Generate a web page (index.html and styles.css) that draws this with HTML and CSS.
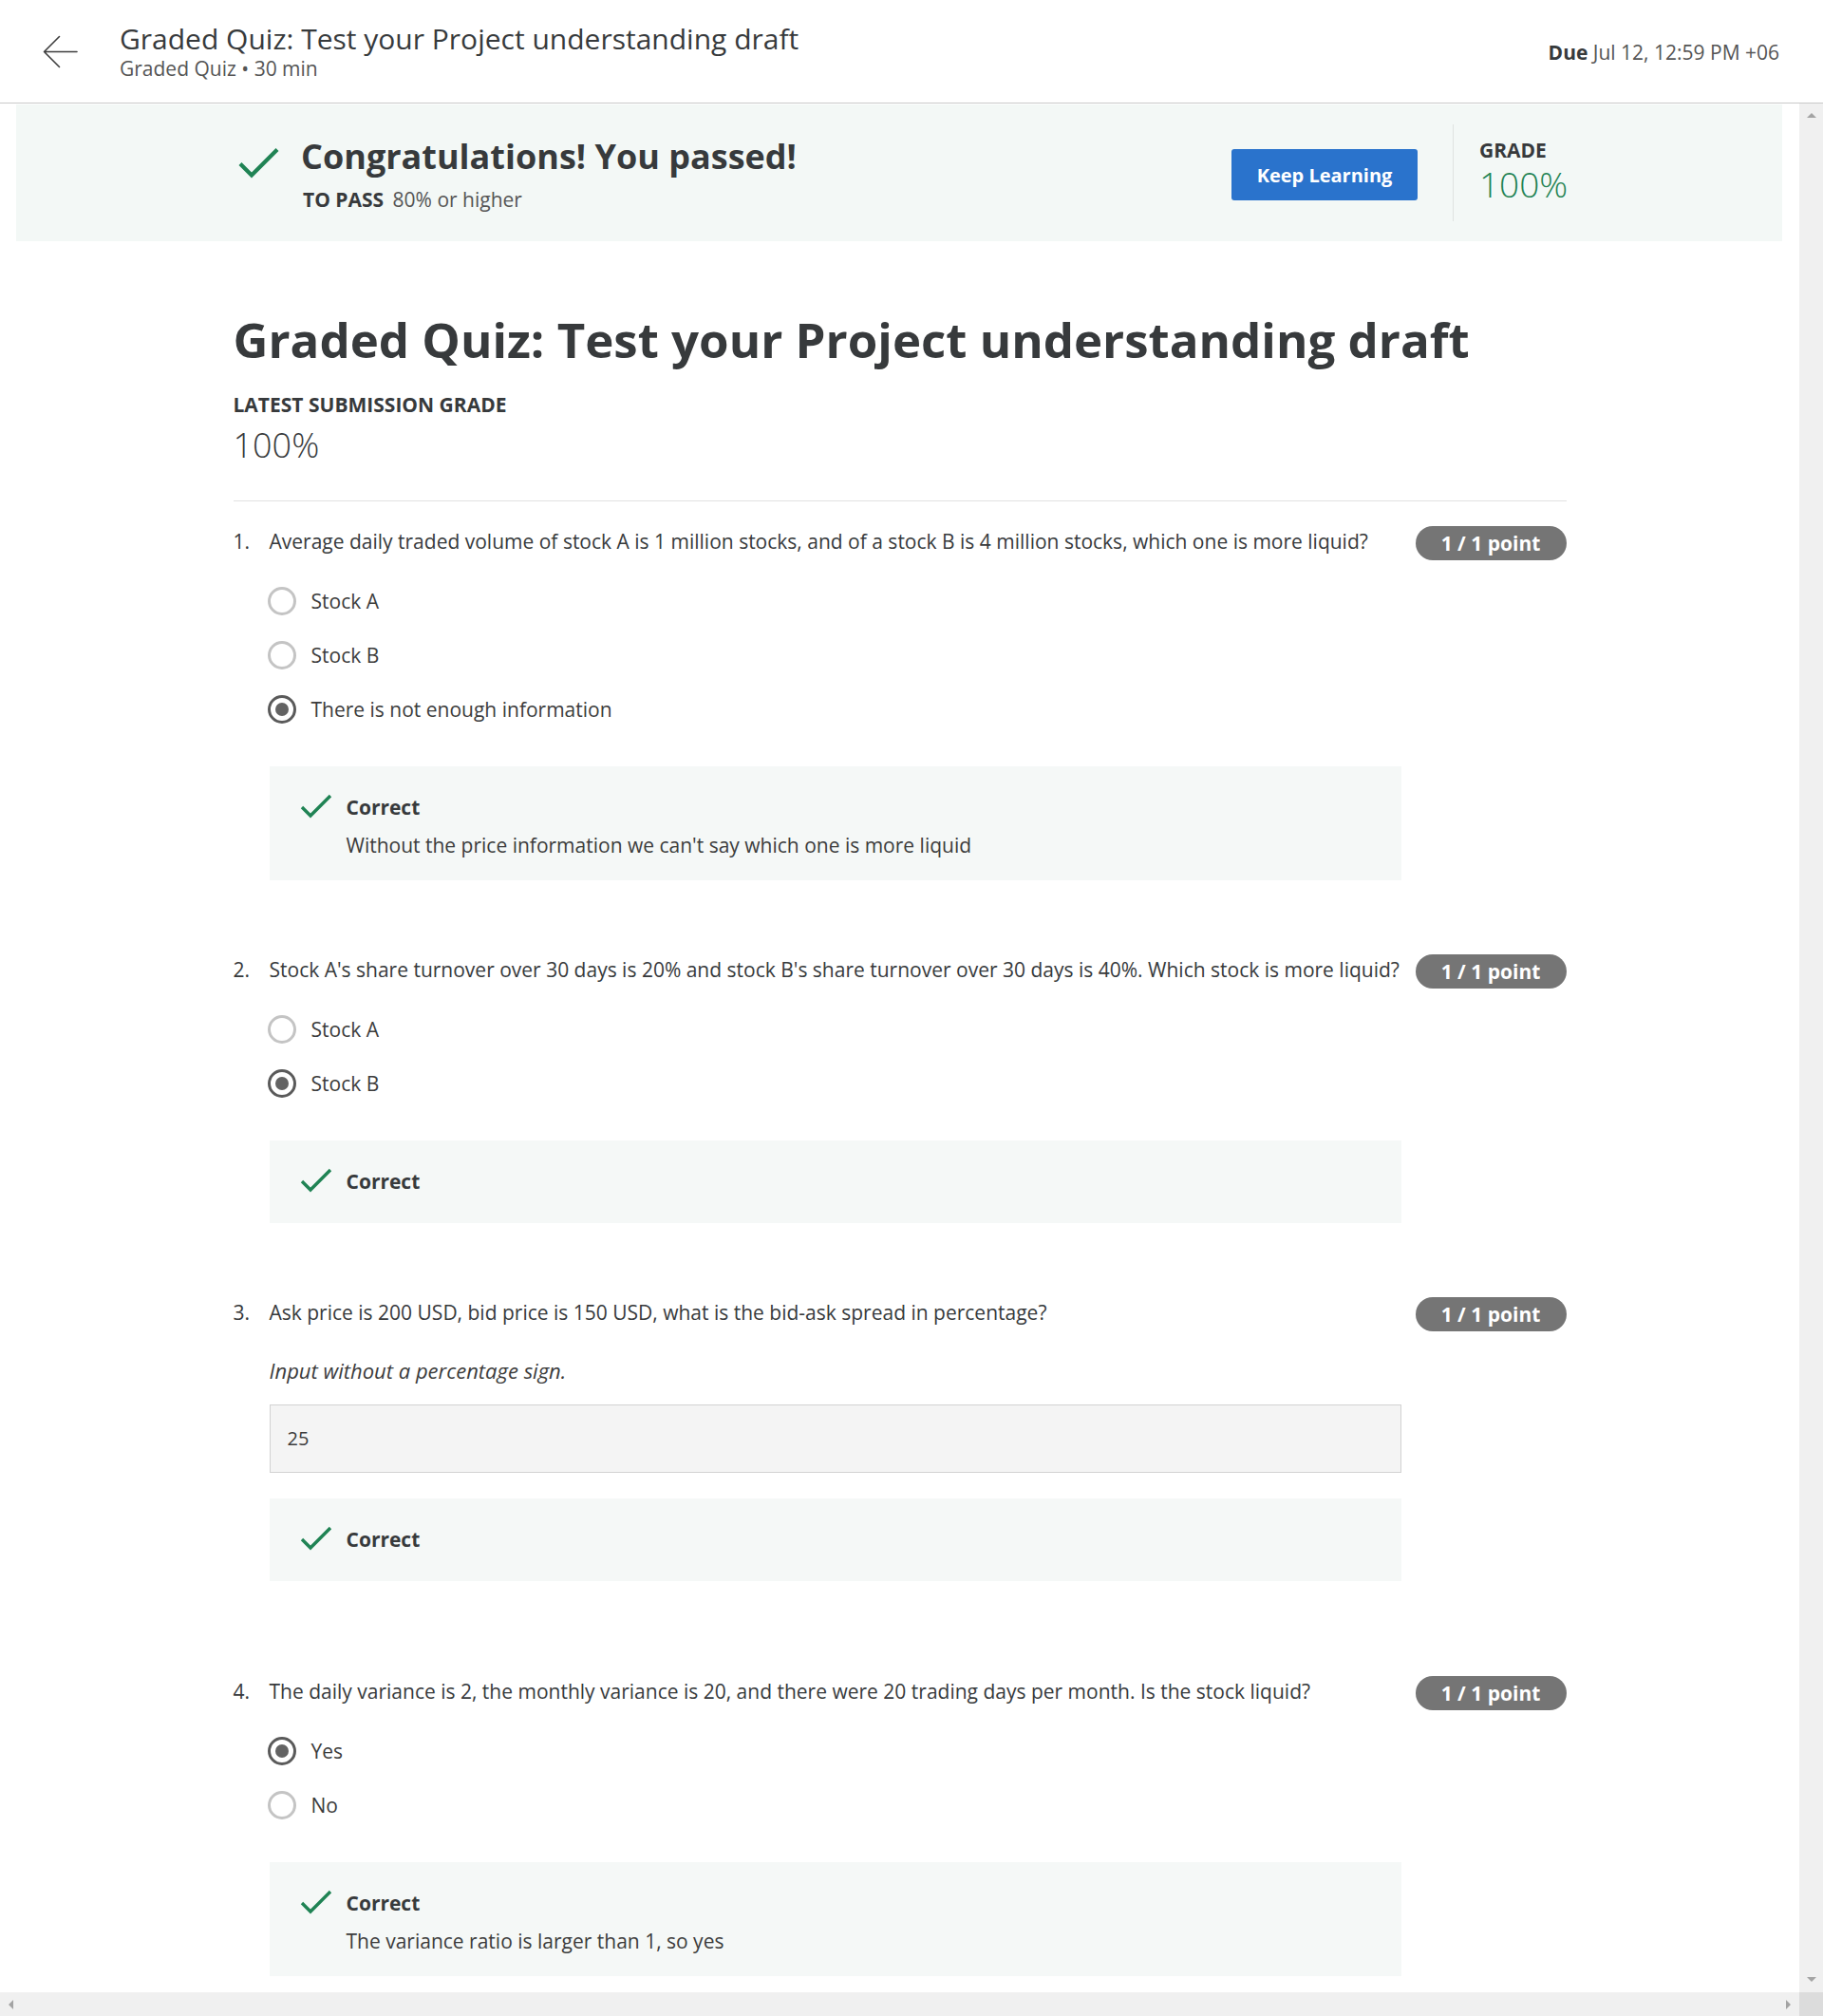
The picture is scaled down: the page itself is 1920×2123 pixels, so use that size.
FILE: index.html
```html
<!DOCTYPE html>
<html lang="en">
<head>
<meta charset="utf-8">
<title>Graded Quiz</title>
<link rel="stylesheet" href="styles.css">
</head>
<body>
<div class="app">
  <header class="topbar">
    <a class="back" href="#" aria-label="Back">
      <svg width="37" height="35" viewBox="0 0 37 35" fill="none" stroke="#3d3d3d" stroke-width="1.6" stroke-linecap="round" stroke-linejoin="round"><path d="M36 17.5H1.5M17.5 1.5L1.5 17.5L17.5 33.5"/></svg>
    </a>
    <div class="titles">
      <div class="title">Graded Quiz: Test your Project understanding draft</div>
      <div class="subtitle">Graded Quiz • 30 min</div>
    </div>
    <div class="due"><b>Due</b> Jul 12, 12:59 PM +06</div>
  </header>

  <div class="viewport">
    <main class="content">
      <section class="banner">
        <div class="banner-inner">
          <div class="pass">
            <svg class="pass-check" width="44" height="34" viewBox="0 0 44 34" fill="none" stroke="#1f8354" stroke-width="4.2" stroke-linecap="butt" stroke-linejoin="miter"><path d="M3 18.5L15 30.5L42 3.5"/></svg>
            <div class="pass-text">
              <h2 class="pass-title">Congratulations! You passed!</h2>
              <p class="pass-req"><b>TO PASS</b> 80% or higher</p>
            </div>
          </div>
          <button class="keep">Keep Learning</button>
          <div class="grade">
            <div class="grade-label">GRADE</div>
            <div class="grade-value">100%</div>
          </div>
        </div>
      </section>

      <div class="column">
        <h1 class="quiz-title">Graded Quiz: Test your Project understanding draft</h1>
        <div class="latest-label">LATEST SUBMISSION GRADE</div>
        <div class="latest-value">100%</div>
        <hr class="rule">

        <div class="question">
          <div class="q-num">1.</div>
          <div class="q-body">
            <div class="q-text">Average daily traded volume of stock A is 1 million stocks, and of a stock B is 4 million stocks, which one is more liquid?</div>
            <div class="options">
              <div class="option"><span class="radio"></span><span>Stock A</span></div>
              <div class="option"><span class="radio"></span><span>Stock B</span></div>
              <div class="option"><span class="radio checked"></span><span>There is not enough information</span></div>
            </div>
            <div class="feedback">
              <div class="fb-head">
                <svg class="fb-check" width="34" height="26" viewBox="0 0 34 26" fill="none" stroke="#1f8354" stroke-width="3.4"><path d="M2 14L11 23L32 2"/></svg>
                <span>Correct</span>
              </div>
              <div class="fb-text">Without the price information we can't say which one is more liquid</div>
            </div>
          </div>
          <div class="q-points"><span class="badge">1 / 1 point</span></div>
        </div>

        <div class="question">
          <div class="q-num">2.</div>
          <div class="q-body">
            <div class="q-text">Stock A's share turnover over 30 days is 20% and stock B's share turnover over 30 days is 40%. Which stock is more liquid?</div>
            <div class="options">
              <div class="option"><span class="radio"></span><span>Stock A</span></div>
              <div class="option"><span class="radio checked"></span><span>Stock B</span></div>
            </div>
            <div class="feedback">
              <div class="fb-head">
                <svg class="fb-check" width="34" height="26" viewBox="0 0 34 26" fill="none" stroke="#1f8354" stroke-width="3.4"><path d="M2 14L11 23L32 2"/></svg>
                <span>Correct</span>
              </div>
            </div>
          </div>
          <div class="q-points"><span class="badge">1 / 1 point</span></div>
        </div>

        <div class="question">
          <div class="q-num">3.</div>
          <div class="q-body">
            <div class="q-text">Ask price is 200 USD, bid price is 150 USD, what is the bid-ask spread in percentage?</div>
            <div class="q-hint">Input without a percentage sign.</div>
            <div class="answer-input">25</div>
            <div class="feedback feedback-tight">
              <div class="fb-head">
                <svg class="fb-check" width="34" height="26" viewBox="0 0 34 26" fill="none" stroke="#1f8354" stroke-width="3.4"><path d="M2 14L11 23L32 2"/></svg>
                <span>Correct</span>
              </div>
            </div>
          </div>
          <div class="q-points"><span class="badge">1 / 1 point</span></div>
        </div>

        <div class="question question-after-input">
          <div class="q-num">4.</div>
          <div class="q-body">
            <div class="q-text">The daily variance is 2, the monthly variance is 20, and there were 20 trading days per month. Is the stock liquid?</div>
            <div class="options">
              <div class="option"><span class="radio checked"></span><span>Yes</span></div>
              <div class="option"><span class="radio"></span><span>No</span></div>
            </div>
            <div class="feedback">
              <div class="fb-head">
                <svg class="fb-check" width="34" height="26" viewBox="0 0 34 26" fill="none" stroke="#1f8354" stroke-width="3.4"><path d="M2 14L11 23L32 2"/></svg>
                <span>Correct</span>
              </div>
              <div class="fb-text">The variance ratio is larger than 1, so yes</div>
            </div>
          </div>
          <div class="q-points"><span class="badge">1 / 1 point</span></div>
        </div>
      </div>
    </main>

    <div class="vscroll">
      <span class="arrow arrow-up"></span>
      <span class="arrow arrow-down"></span>
    </div>
    <div class="hscroll">
      <span class="arrow arrow-left"></span>
      <span class="arrow arrow-right"></span>
    </div>
    <div class="corner"></div>
  </div>
</div>
</body>
</html>
```

FILE: styles.css
```css
* { box-sizing: border-box; }

html, body {
  margin: 0;
  padding: 0;
  background: #ffffff;
}

body {
  font-family: "Open Sans", "Noto Sans", sans-serif;
  color: #373a3c;
  font-size: 21px;
  line-height: 30px;
}

.app {
  width: 1920px;
  height: 2123px;
  display: flex;
  flex-direction: column;
  overflow: hidden;
}

/* ---------- top bar ---------- */
.topbar {
  flex: 0 0 109px;
  display: flex;
  align-items: center;
  padding: 0 46px 0 45px;
  border-bottom: 1px solid #c9c9c9;
  background: #fff;
}

.back {
  display: flex;
  width: 37px;
  height: 35px;
  margin-right: 44px;
}

.titles {
  flex: 1;
  display: flex;
  flex-direction: column;
}

.title {
  font-size: 30px;
  line-height: 36px;
  color: #373a3c;
}

.subtitle {
  font-size: 21px;
  line-height: 26px;
  color: #555;
}

.due {
  font-size: 21px;
  line-height: 30px;
  color: #555;
  padding-top: 1px;
}

.due b {
  color: #373a3c;
  font-weight: 700;
}

/* ---------- viewport with fake scrollbars ---------- */
.viewport {
  flex: 1;
  display: grid;
  grid-template-columns: 1fr 25px;
  grid-template-rows: 1fr 25px;
  min-height: 0;
}

.content {
  overflow: hidden;
  min-width: 0;
}

.vscroll {
  background: #f0f0f0;
  display: flex;
  flex-direction: column;
  justify-content: space-between;
  align-items: center;
  padding: 10px 0 11px;
}

.hscroll {
  background: #f0f0f0;
  display: flex;
  justify-content: space-between;
  align-items: center;
  padding: 0 9px 0 9px;
}

.corner {
  background: #dcdcdc;
}

.arrow {
  width: 0;
  height: 0;
  display: block;
}

.arrow-up {
  border-left: 5px solid transparent;
  border-right: 5px solid transparent;
  border-bottom: 5px solid #a3a3a3;
}

.arrow-down {
  border-left: 5px solid transparent;
  border-right: 5px solid transparent;
  border-top: 5px solid #a3a3a3;
}

.arrow-left {
  border-top: 5px solid transparent;
  border-bottom: 5px solid transparent;
  border-right: 5px solid #a3a3a3;
}

.arrow-right {
  border-top: 5px solid transparent;
  border-bottom: 5px solid transparent;
  border-left: 5px solid #a3a3a3;
}

/* ---------- pass banner ---------- */
.banner {
  margin: 1px 18px 0 17px;
  height: 144px;
  background: #f3f8f6;
}

.banner-inner {
  width: 1404px;
  height: 100%;
  margin: 0 auto;
  display: flex;
  align-items: center;
}

.pass {
  display: flex;
  align-items: flex-start;
  padding-left: 5px;
  margin-top: 2px;
}

.pass-check {
  margin-top: 10px;
  margin-right: 23px;
  flex: none;
}

.pass-title {
  margin: 0;
  font-size: 36px;
  line-height: 42px;
  font-weight: 700;
  color: #373a3c;
}

.pass-req {
  margin: 11px 0 0 2px;
  font-size: 21px;
  line-height: 26px;
  color: #555;
}

.pass-req b {
  color: #373a3c;
  margin-right: 4px;
}

.keep {
  margin-left: auto;
  margin-right: 37px;
  width: 196px;
  height: 54px;
  border: 0;
  border-radius: 3px;
  background: #2a73cc;
  color: #fff;
  font-family: inherit;
  font-size: 20px;
  font-weight: 700;
  padding: 0;
  margin-top: 4px;
}

.grade {
  align-self: center;
  border-left: 1px solid #dfe3e1;
  height: 102px;
  width: 119px;
  padding: 13px 0 0 27px;
}

.grade-label {
  font-size: 21px;
  line-height: 28px;
  font-weight: 700;
  color: #373a3c;
}

.grade-value {
  font-size: 37px;
  line-height: 44px;
  font-weight: 300;
  color: #1f8354;
}

/* ---------- main column ---------- */
.column {
  width: 1404px;
  margin: 0 auto;
  padding-top: 71px;
}

.quiz-title {
  margin: 0;
  font-size: 51px;
  line-height: 64px;
  font-weight: 700;
  color: #373a3c;
}

.latest-label {
  margin-top: 23px;
  font-size: 21px;
  line-height: 28px;
  font-weight: 700;
  color: #373a3c;
}

.latest-value {
  margin-top: 7px;
  font-size: 36px;
  line-height: 44px;
  font-weight: 300;
  color: #373a3c;
}

.rule {
  margin: 36px 0 0;
  border: 0;
  border-top: 1px solid #e1e1e1;
  height: 0;
}

/* ---------- questions ---------- */
.question {
  display: grid;
  grid-template-columns: 38px 1192px 1fr;
  align-items: start;
  margin-top: 27px;
}

.question + .question {
  margin-top: 79px;
}

.question.question-after-input {
  margin-top: 101px;
}

.q-num,
.q-text {
  font-size: 21px;
  line-height: 30px;
  color: #373a3c;
}

.q-points {
  display: flex;
  justify-content: flex-end;
  margin-top: -1px;
}

.badge {
  display: inline-flex;
  align-items: center;
  justify-content: center;
  width: 159px;
  height: 36px;
  border-radius: 18px;
  background: #757575;
  color: #fff;
  font-size: 21px;
  font-weight: 700;
}

.options {
  margin-top: 33px;
  display: flex;
  flex-direction: column;
  gap: 27px;
}

.option {
  display: flex;
  align-items: center;
  gap: 16px;
  height: 30px;
  margin-left: -2px;
  color: #3c3c3c;
}

.radio {
  flex: none;
  width: 30px;
  height: 30px;
  border: 3px solid #c4c4c4;
  border-radius: 50%;
  background: #fff;
  display: flex;
  align-items: center;
  justify-content: center;
}

.radio.checked {
  border-color: #5a5a5a;
}

.radio.checked::after {
  content: "";
  width: 14px;
  height: 14px;
  border-radius: 50%;
  background: #636363;
}

.feedback {
  margin-top: 45px;
  background: #f5f8f7;
  padding: 28px 32px 29px;
}

.fb-head {
  display: flex;
  align-items: center;
  height: 30px;
  font-weight: 700;
  color: #373a3c;
}

.fb-check {
  flex: none;
  margin-right: 15px;
  margin-top: -2px;
}

.fb-text {
  margin: 10px 0 -7px 49px;
  color: #3c3c3c;
}

.q-hint {
  margin-top: 31px;
  font-size: 22px;
  font-style: italic;
  color: #3c3c3c;
}

.answer-input {
  margin-top: 21px;
  height: 72px;
  background: #f4f4f4;
  border: 1px solid #d2d2d2;
  padding: 0 18px;
  display: flex;
  align-items: center;
  font-size: 20px;
  color: #3c3c3c;
}

.feedback-tight {
  margin-top: 27px;
}
```
